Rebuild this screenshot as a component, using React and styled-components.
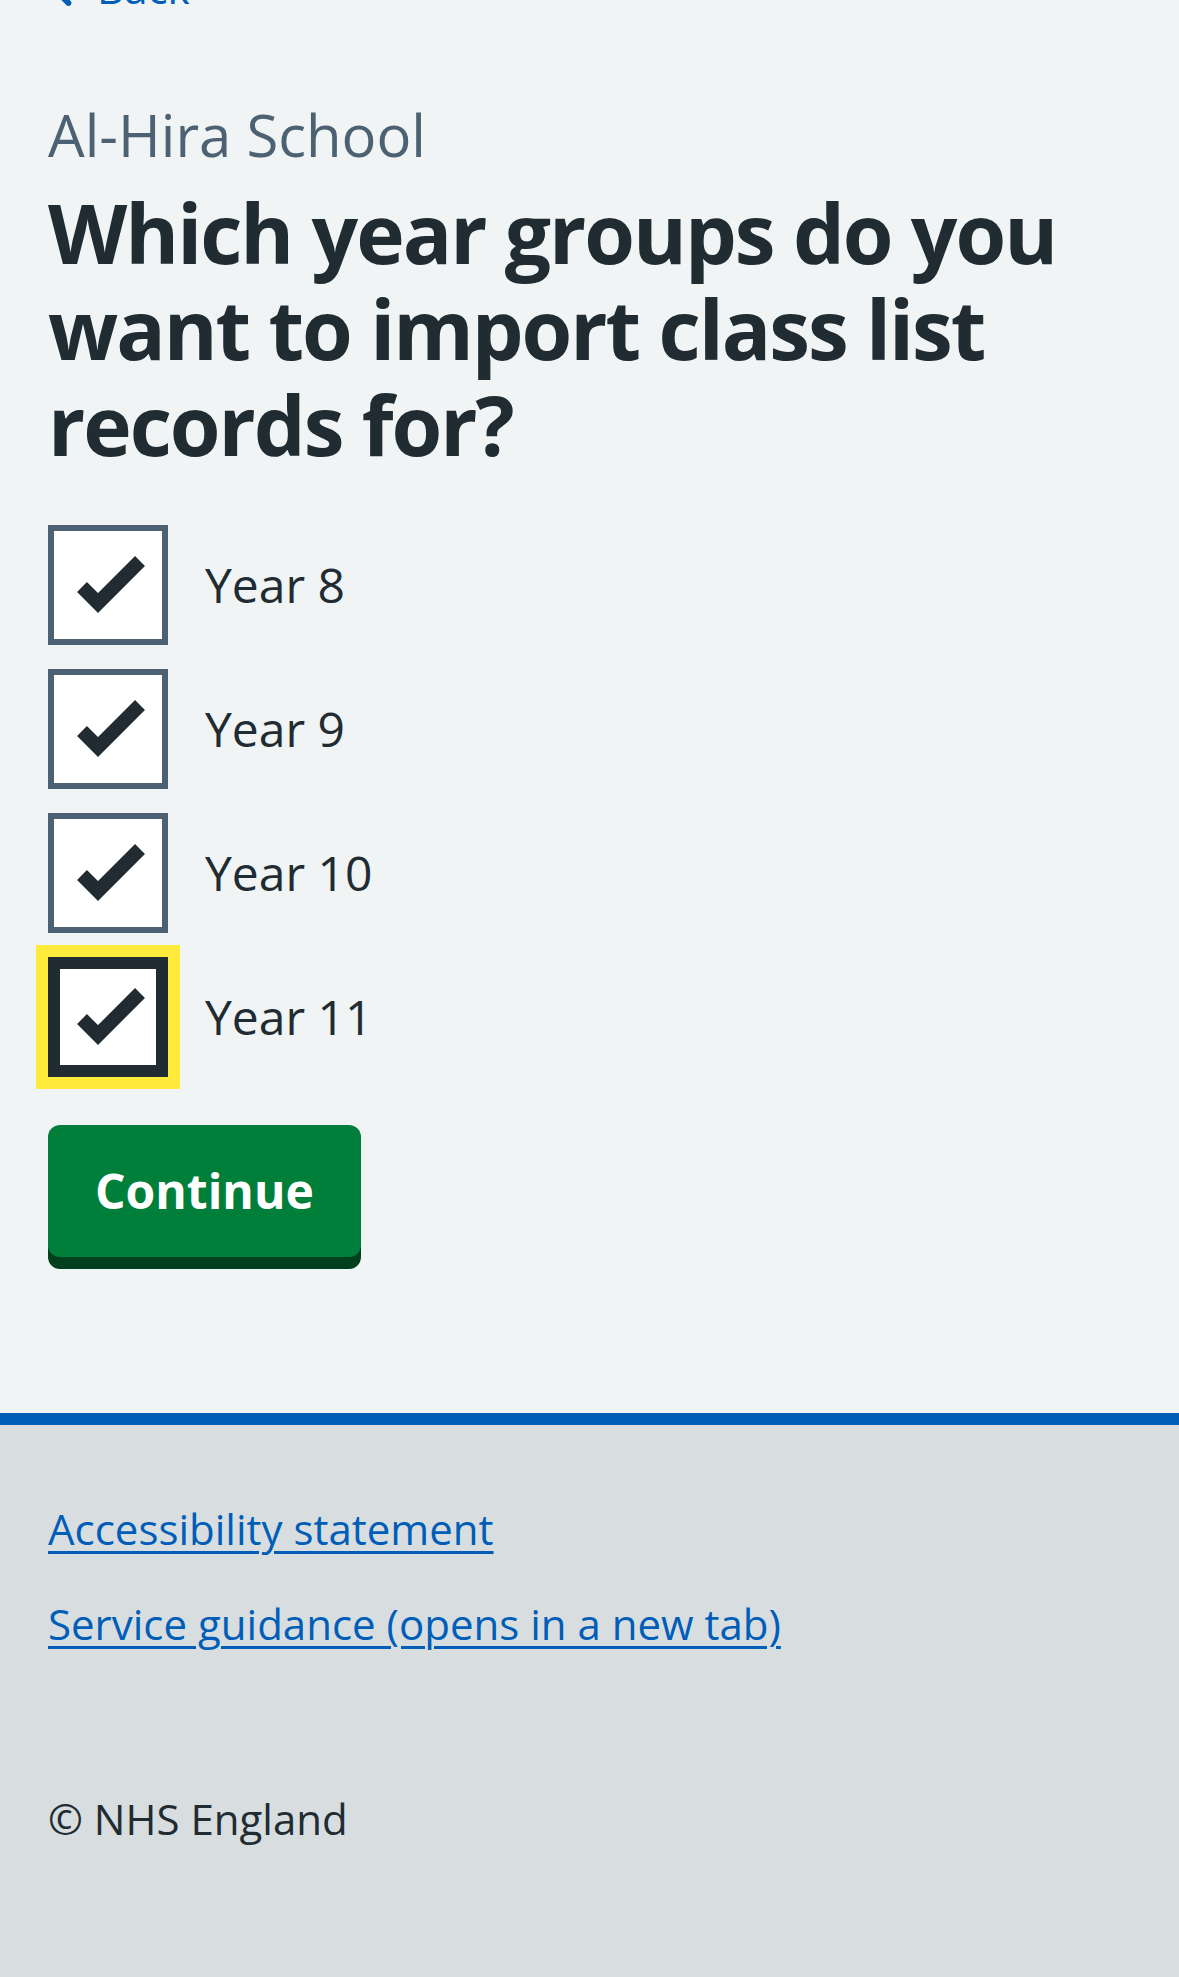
import React from "react";
import styled, { createGlobalStyle } from "styled-components";

const GlobalStyle = createGlobalStyle`
  html, body {
    margin: 0;
    padding: 0;
    background: #f0f4f5;
  }
  body {
    font-family: "Open Sans", "Noto Sans", Arial, sans-serif;
    color: #212b32;
  }
  * {
    box-sizing: border-box;
  }
`;

const Page = styled.div`
  min-height: 100vh;
  display: flex;
  flex-direction: column;
  overflow: hidden;
`;

const Main = styled.main`
  padding: 0 48px 156px;
`;

const BackLink = styled.a`
  display: flex;
  align-items: center;
  margin-top: -33px;
  height: 42px;
  font-size: 42px;
  line-height: 42px;
  color: #005eb8;
  text-decoration: none;

  svg {
    flex: none;
    margin-left: -23px;
  }
`;

const Caption = styled.span`
  display: block;
  margin-top: 96px;
  font-size: 58px;
  line-height: 60px;
  color: #4c6272;
`;

const Heading = styled.h1`
  margin: 19px 0 53px;
  font-size: 82px;
  line-height: 96px;
  font-weight: 700;
  letter-spacing: -2px;
  color: #212b32;
`;

const Options = styled.div`
  display: flex;
  flex-direction: column;
  gap: 24px;
`;

const Option = styled.label`
  display: flex;
  align-items: center;
  gap: 37px;
  font-size: 48px;
  line-height: 60px;
  color: #212b32;
`;

const Box = styled.span`
  flex: none;
  display: flex;
  width: 120px;
  height: 120px;
  background: #ffffff;
  border: ${p => (p.$focused ? "12px solid #212b32" : "6px solid #4c6272")};
  box-shadow: ${p => (p.$focused ? "0 0 0 12px #ffeb3b" : "none")};
`;

const Button = styled.button`
  display: flex;
  align-items: center;
  justify-content: center;
  margin-top: 48px;
  height: 132px;
  padding: 0 47px;
  border: none;
  border-radius: 12px;
  background: #007f3b;
  box-shadow: 0 12px 0 #00401e;
  color: #ffffff;
  font-family: inherit;
  font-size: 48px;
  font-weight: 700;
  line-height: 48px;
`;

const Footer = styled.footer`
  flex: 1;
  background: #d8dde0;
  border-top: 12px solid #005eb8;
  padding: 83px 48px 140px;
`;

const FooterLinks = styled.ul`
  list-style: none;
  margin: 0;
  padding: 0;
  display: flex;
  flex-direction: column;
  align-items: flex-start;
  gap: 53px;
`;

const FooterLink = styled.a`
  display: block;
  font-size: 42px;
  line-height: 42px;
  color: #005eb8;
  text-decoration: underline;
  text-decoration-thickness: 3px;
  text-underline-offset: 6px;
`;

const Copyright = styled.p`
  margin: 153px 0 0;
  font-size: 42px;
  line-height: 42px;
  color: #212b32;
`;

const Chevron = () => (
  <svg width="72" height="72" viewBox="0 0 24 24" aria-hidden="true">
    <path
      fill="#005eb8"
      d="M8.5 12c0-.3.1-.5.3-.7l5-5c.4-.4 1-.4 1.4 0s.4 1 0 1.4L10.9 12l4.3 4.3c.4.4.4 1 0 1.4s-1 .4-1.4 0l-5-5c-.2-.2-.3-.4-.3-.7z"
    />
  </svg>
);

const Tick = ({ focused }) => {
  const inset = focused ? 12 : 6;
  const size = 120 - inset * 2;
  return (
    <svg width={size} height={size} viewBox={`${inset} ${inset} ${size} ${size}`} aria-hidden="true">
      <polyline
        points="34,62 50,78 92,36"
        fill="none"
        stroke="#212b32"
        strokeWidth="14"
        strokeLinejoin="miter"
        strokeLinecap="butt"
      />
    </svg>
  );
};

const years = ["Year 8", "Year 9", "Year 10", "Year 11"];

export default function App() {
  return (
    <>
      <GlobalStyle />
      <Page>
        <Main>
          <BackLink href="#">
            <Chevron />
            Back
          </BackLink>
          <Caption>Al-Hira School</Caption>
          <Heading>Which year groups do you want to import class list records for?</Heading>
          <Options>
            {years.map((year, i) => {
              const focused = i === years.length - 1;
              return (
                <Option key={year}>
                  <Box $focused={focused}>
                    <Tick focused={focused} />
                  </Box>
                  {year}
                </Option>
              );
            })}
          </Options>
          <Button type="button">Continue</Button>
        </Main>
        <Footer>
          <FooterLinks>
            <li>
              <FooterLink href="#">Accessibility statement</FooterLink>
            </li>
            <li>
              <FooterLink href="#">Service guidance (opens in a new tab)</FooterLink>
            </li>
          </FooterLinks>
          <Copyright>© NHS England</Copyright>
        </Footer>
      </Page>
    </>
  );
}
